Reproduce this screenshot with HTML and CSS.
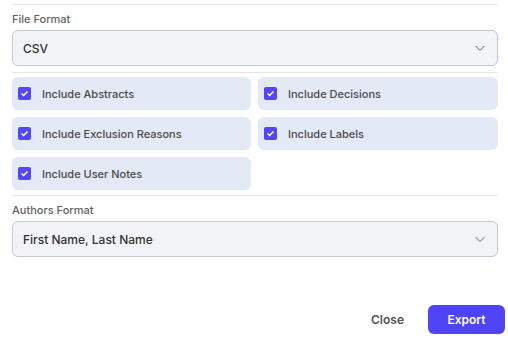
FILE: index.html
```html
<!DOCTYPE html>
<html>
<head>
  <title>Export</title>
  <link rel="stylesheet" href="styles.css">
</head>
<body>
  <div class="dialog">
    <div class="content">
      <hr class="divider top">
      <label class="field-label">File Format</label>
      <div class="select">
        <span>CSV</span>
        <svg class="chevron" width="14" height="14" viewBox="0 0 14 14"><path d="M2.5 5 L7 9.5 L11.5 5" fill="none" stroke="#666" stroke-width="1"/></svg>
      </div>
      <hr class="divider">
      <div class="options">
        <div class="option"><span class="check"><svg width="9" height="9" viewBox="0 0 9 9"><path d="M1.5 4.6 L3.6 6.6 L7.5 2.4" fill="none" stroke="#fff" stroke-width="1.4"/></svg></span>Include Abstracts</div>
        <div class="option"><span class="check"><svg width="9" height="9" viewBox="0 0 9 9"><path d="M1.5 4.6 L3.6 6.6 L7.5 2.4" fill="none" stroke="#fff" stroke-width="1.4"/></svg></span>Include Decisions</div>
        <div class="option"><span class="check"><svg width="9" height="9" viewBox="0 0 9 9"><path d="M1.5 4.6 L3.6 6.6 L7.5 2.4" fill="none" stroke="#fff" stroke-width="1.4"/></svg></span>Include Exclusion Reasons</div>
        <div class="option"><span class="check"><svg width="9" height="9" viewBox="0 0 9 9"><path d="M1.5 4.6 L3.6 6.6 L7.5 2.4" fill="none" stroke="#fff" stroke-width="1.4"/></svg></span>Include Labels</div>
        <div class="option"><span class="check"><svg width="9" height="9" viewBox="0 0 9 9"><path d="M1.5 4.6 L3.6 6.6 L7.5 2.4" fill="none" stroke="#fff" stroke-width="1.4"/></svg></span>Include User Notes</div>
      </div>
      <hr class="divider">
      <label class="field-label">Authors Format</label>
      <div class="select">
        <span>First Name, Last Name</span>
        <svg class="chevron" width="14" height="14" viewBox="0 0 14 14"><path d="M2.5 5 L7 9.5 L11.5 5" fill="none" stroke="#666" stroke-width="1"/></svg>
      </div>
    </div>
    <div class="footer">
      <button class="btn-close">Close</button>
      <button class="btn-export">Export</button>
    </div>
  </div>
</body>
</html>
```

FILE: styles.css
```css
body {
  margin: 0;
  font-family: Inter, "Noto Sans", sans-serif;
  background: #fff;
  color: #333;
}

.dialog {
  width: 508px;
  height: 341px;
  display: flex;
  flex-direction: column;
}

.content {
  padding: 4px 10px 0 12px;
}

.divider {
  border: none;
  border-top: 1px solid #e6e7ea;
  margin: 0;
}

.field-label {
  display: block;
  font-size: 11px;
  line-height: 13px;
  font-weight: 500;
  color: #5f5f5f;
  margin: 8px 0 4px;
}

.select {
  height: 34px;
  border: 1px solid #c3c9d8;
  border-radius: 6px;
  background: #f2f3f7;
  display: flex;
  align-items: center;
  justify-content: space-between;
  padding: 0 10px;
  font-size: 12px;
  font-weight: 500;
  color: #333;
  margin-bottom: 6px;
}

.options {
  display: grid;
  grid-template-columns: 239px 240px;
  gap: 7px;
  margin: 4px 0 5px;
}

.option {
  height: 33px;
  background: #e4e9f6;
  border-radius: 6px;
  display: flex;
  align-items: center;
  padding-left: 6px;
  font-size: 11px;
  font-weight: 500;
  color: #4a4a4a;
}

.check {
  width: 13px;
  height: 13px;
  border-radius: 2px;
  background: #5346f6;
  display: flex;
  align-items: center;
  justify-content: center;
  margin-right: 11px;
}

.footer {
  margin-top: auto;
  display: flex;
  justify-content: flex-end;
  align-items: center;
  padding: 0 3px 7px 0;
}

.btn-close {
  background: none;
  border: none;
  font-family: inherit;
  font-size: 12px;
  font-weight: 600;
  color: #555;
  margin-right: 18px;
}

.btn-export {
  width: 77px;
  height: 29px;
  background: #4f45f6;
  color: #fff;
  border: none;
  border-radius: 6px;
  font-family: inherit;
  font-size: 12px;
  font-weight: 600;
}
```
